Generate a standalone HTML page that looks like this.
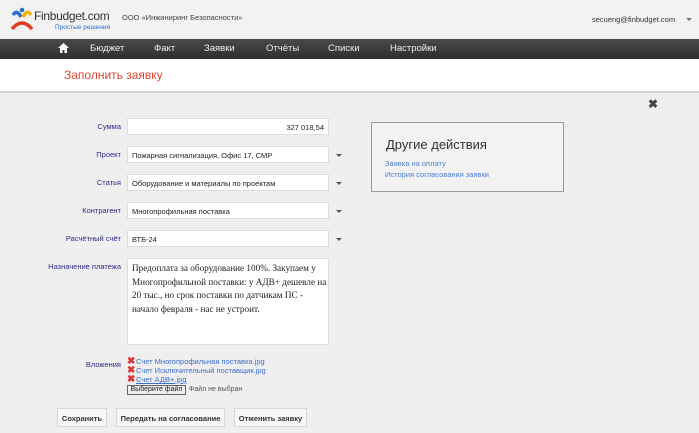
<!DOCTYPE html>
<html><head><meta charset="utf-8"><style>
*{margin:0;padding:0;box-sizing:border-box}
body{width:699px;height:433px;overflow:hidden;background:#efefef;font-family:"Liberation Sans",Arial,sans-serif;position:relative;font-size:8px;color:#222}
.a{position:absolute}
#hdr{left:0;top:0;width:699px;height:39px;background:#f2f2f2}
#nav{left:0;top:39px;width:699px;height:20px;background:linear-gradient(#4a4a4a,#2e2e2e);color:#eee;font-size:9.5px}
#nav span{position:absolute;top:4px}
#wb{left:0;top:59px;width:699px;height:34px;background:#fff;border-bottom:2px solid #d4d4d4}
.lbl{color:#2a2a8c;font-size:7.5px;text-align:right;width:80px;left:41px}
.inp{left:127px;width:202px;height:17px;background:#fff;border:1px solid #ddd;font-size:7.5px;padding:4px 0 0 4px}
.arr{left:336px;width:0;height:0;border-left:3px solid transparent;border-right:3px solid transparent;border-top:3px solid #555}
.lnk{color:#3a6fd0;font-size:7.5px;left:136px}
.x{left:127px;color:#d33;font-size:10px;font-weight:bold;line-height:10px}
.btn{top:408px;height:19px;background:#f7f7f7;border:1px solid #d8d8d8;font-size:7.5px;font-weight:bold;color:#333;text-align:center;padding-top:5px}
</style></head><body>
<div id="hdr" class="a"></div>
<svg class="a" style="left:9px;top:6px" width="26" height="26" viewBox="0 0 26 26">
<path d="M4 9 Q8 3 12 11" stroke="#2a6fc8" stroke-width="3.5" fill="none"/>
<path d="M22 9 Q18 3 14 11" stroke="#f0b400" stroke-width="3.5" fill="none"/>
<path d="M3 23 Q13 11 23 23" stroke="#e23b1e" stroke-width="3.5" fill="none"/>
<circle cx="13" cy="4" r="2.3" fill="#2a6fc8"/></svg>
<div class="a" style="left:34px;top:9px;font-size:12px;letter-spacing:-0.3px;color:#333">Finbudget.com</div>
<div class="a" style="left:55px;top:24px;font-size:6.5px;color:#2a6fc8">Простые решения</div>
<div class="a" style="left:122px;top:13px;font-size:7.5px;color:#444">ООО «Инжиниринг Безопасности»</div>
<div class="a" style="left:592px;top:15px;font-size:7.5px;color:#333">secueng@finbudget.com</div>
<div class="a arr" style="left:686px;top:18px;border-top-color:#777"></div>
<div id="nav" class="a">
<svg class="a" style="left:58px;top:4px" width="11" height="10" viewBox="0 0 11 10"><path d="M5.5 0 L11 5 H9 V10 H6.5 V7 H4.5 V10 H2 V5 H0 Z" fill="#fff"/></svg>
<span style="left:90px">Бюджет</span><span style="left:154px">Факт</span><span style="left:204px">Заявки</span><span style="left:266px">Отчёты</span><span style="left:328px">Списки</span><span style="left:390px">Настройки</span></div>
<div id="wb" class="a"><div class="a" style="left:64px;top:9px;font-size:12px;color:#e0442e">Заполнить заявку</div></div>
<div class="a" style="left:648px;top:97px;font-size:12px;font-weight:bold;color:#444">✖</div>

<div class="a lbl" style="top:122px">Сумма</div>
<div class="a inp" style="top:118px;text-align:right;padding-right:4px">327 018,54</div>
<div class="a lbl" style="top:150px">Проект</div>
<div class="a inp" style="top:146px">Пожарная сигнализация, Офис 17, СМР</div><div class="a arr" style="top:154px"></div>
<div class="a lbl" style="top:178px">Статья</div>
<div class="a inp" style="top:174px">Оборудование и материалы по проектам</div><div class="a arr" style="top:182px"></div>
<div class="a lbl" style="top:206px">Контрагент</div>
<div class="a inp" style="top:202px">Многопрофильная поставка</div><div class="a arr" style="top:210px"></div>
<div class="a lbl" style="top:234px">Расчётный счёт</div>
<div class="a inp" style="top:230px">ВТБ-24</div><div class="a arr" style="top:238px"></div>
<div class="a lbl" style="top:262px">Назначение платежа</div>
<div class="a inp" style="top:258px;height:87px;font-family:'Liberation Serif',serif;font-size:9.2px;line-height:13.5px;padding:3px 4px;white-space:nowrap">Предоплата за оборудование 100%. Закупаем у<br>Многопрофильной поставки: у АДВ+ дешевле на<br>20 тыс., но срок поставки по датчикам ПС -<br>начало февраля - нас не устроит.</div>
<div class="a lbl" style="top:360px">Вложения</div>
<div class="a x" style="top:357px">✖</div><div class="a lnk" style="top:357px">Счет Многопрофильная поставка.jpg</div>
<div class="a x" style="top:366px">✖</div><div class="a lnk" style="top:366px">Счет Исключительный поставщик.jpg</div>
<div class="a x" style="top:375px">✖</div><div class="a lnk" style="top:375px;text-decoration:underline">Счет АДВ+.jpg</div>
<div class="a" style="left:127px;top:385px;width:59px;height:10px;border:1px solid #666;background:#eee;font-size:7px;text-align:center;line-height:8px">Выберите файл</div>
<div class="a" style="left:189px;top:386px;font-size:7px;color:#555">Файл не выбран</div>
<div class="a btn" style="left:57px;width:50px">Сохранить</div>
<div class="a btn" style="left:116px;width:109px">Передать на согласование</div>
<div class="a btn" style="left:234px;width:73px">Отменить заявку</div>

<div class="a" style="left:371px;top:122px;width:193px;height:70px;border:1px solid #999;background:#f2f2f2">
<div class="a" style="left:14px;top:14px;font-size:13px;color:#333">Другие действия</div>
<div class="a" style="left:13px;top:36px;font-size:7.5px;color:#4a7fd4">Заявка на оплату</div>
<div class="a" style="left:13px;top:47px;font-size:7.5px;color:#4a7fd4">История согласования заявки</div>
</div>
</body></html>
